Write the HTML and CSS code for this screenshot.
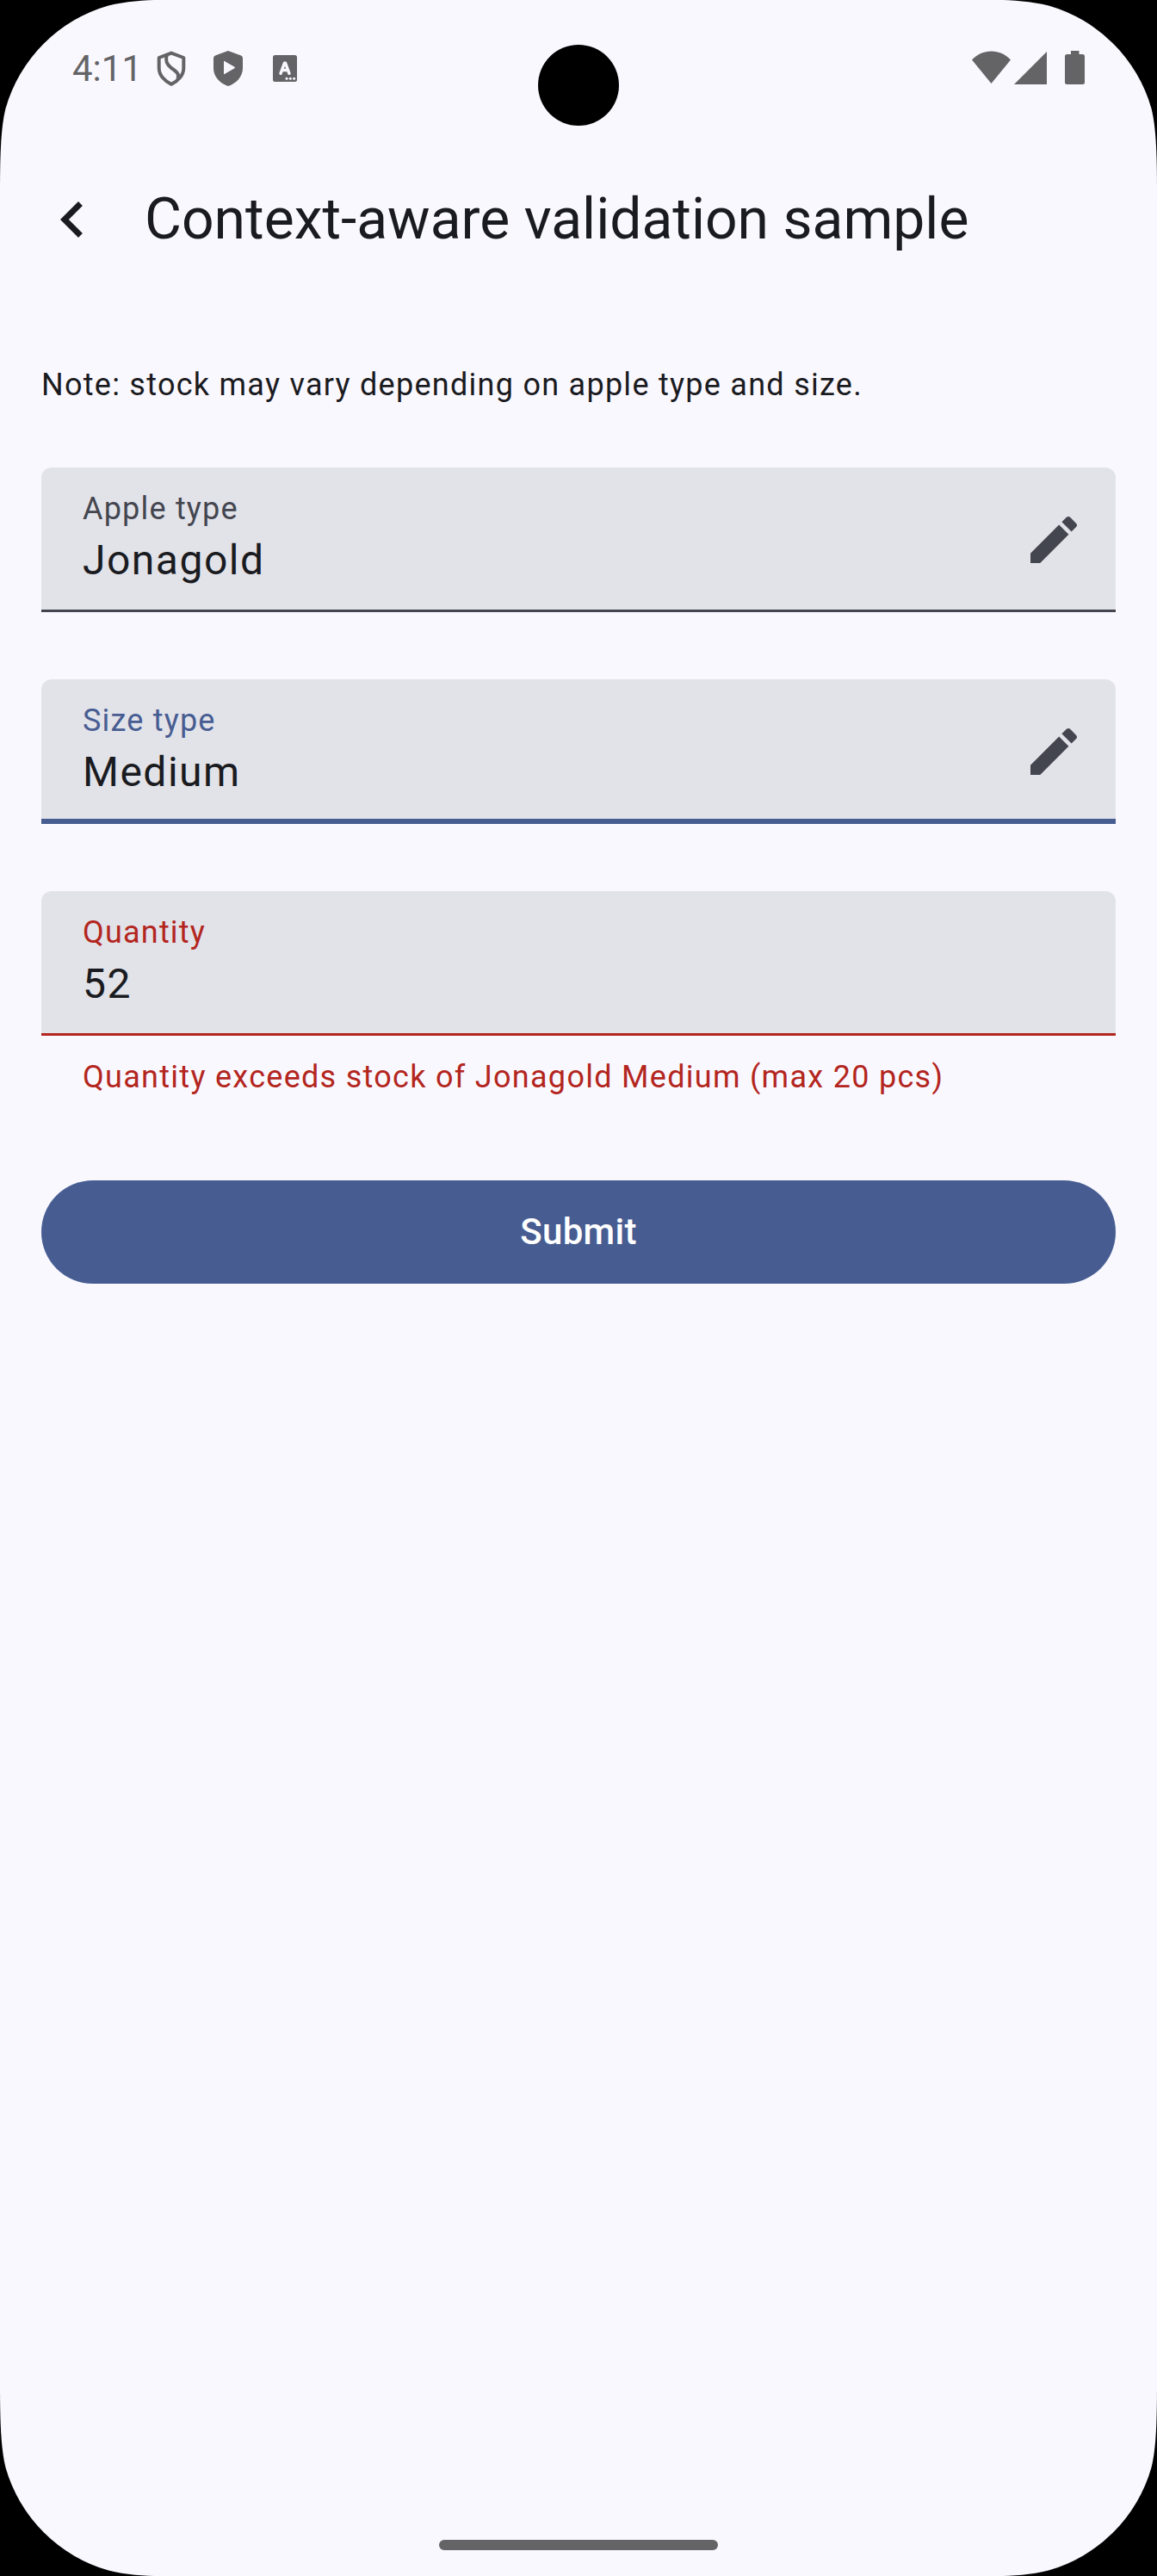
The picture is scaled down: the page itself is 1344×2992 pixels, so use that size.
FILE: index.html
```html
<!DOCTYPE html>
<html lang="en">
<head>
<meta charset="utf-8">
<title>Context-aware validation sample</title>
<link rel="stylesheet" href="styles.css">
</head>
<body>
<div class="screen">
  <header class="status-bar">
    <span class="clock">4:11</span>
    <svg class="status-icon shield" viewBox="0 0 34 42"><path d="M17 2.6L31.3 8V20C31.3 28.5 24.500 35.500 17 38.800C9.500 35.500 2.700 28.500 2.700 20V8Z"/><path d="M11.800 5C9.500 12 12 16 17 20C23 24 27 27.500 24.500 33"/></svg>
    <svg class="status-icon play" viewBox="0 0 34 42"><path fill-rule="evenodd" d="M17 0L32 5.400Q34 6.200 34 8.500V20C34 30 26.500 38 17 41C7.500 38 0 30 0 20V8.500Q0 6.200 2 5.400ZM12 12.300V26.700Q12 27.500 12.800 27.100L24.500 20.300Q25.300 19.500 24.500 18.700L12.800 11.900Q12 11.500 12 12.300Z"/></svg>
    <svg class="status-icon caption" viewBox="0 0 28 31"><rect width="28" height="31" rx="2.500"/><path d="M9 21.300L13.400 9.300H14.600L19 21.300M10.800 17.500H17.200"/><circle cx="16" cy="27.200" r="1.500"/><circle cx="20.300" cy="27.200" r="1.500"/><circle cx="24.600" cy="27.200" r="1.500"/></svg>
    <span class="spacer"></span>
    <svg class="status-icon wifi" viewBox="0 0 45 38"><path d="M0 10.500C6 4 14 .5 22.500 .5S39 4 45 10.500L22.500 38Z"/></svg>
    <svg class="status-icon signal" viewBox="0 0 38 38"><path d="M38 0V38H0Z"/></svg>
    <svg class="status-icon battery" viewBox="0 0 23 39"><path d="M7 0H16.500V4H20.500Q23 4 23 6.500V36.500Q23 39 20.500 39H2.500Q0 39 0 36.500V6.500Q0 4 2.500 4H7Z"/></svg>
  </header>
  <div class="camera"></div>

  <div class="app-bar">
    <svg class="back" viewBox="0 0 24 24"><path d="M15.410 7.410L14 6l-6 6 6 6 1.410-1.410L10.830 12z"/></svg>
    <h1 class="title">Context-aware validation sample</h1>
  </div>

  <main class="form">
    <p class="note">Note: stock may vary depending on apple type and size.</p>
    <div class="field">
      <div class="field-text">
        <span class="label">Apple type</span>
        <span class="value">Jonagold</span>
      </div>
      <svg class="edit" viewBox="0 0 24 24"><path d="M3 17.250V21h3.750L17.810 9.940l-3.750-3.750L3 17.250zM20.710 7.040c.39-.39.39-1.020 0-1.410l-2.340-2.340c-.39-.39-1.020-.39-1.410 0l-1.830 1.830 3.750 3.750 1.830-1.830z"/></svg>
    </div>
    <div class="field focused">
      <div class="field-text">
        <span class="label">Size type</span>
        <span class="value">Medium</span>
      </div>
      <svg class="edit" viewBox="0 0 24 24"><path d="M3 17.250V21h3.750L17.810 9.940l-3.750-3.750L3 17.250zM20.710 7.040c.39-.39.39-1.020 0-1.410l-2.340-2.340c-.39-.39-1.020-.39-1.410 0l-1.830 1.830 3.750 3.750 1.830-1.830z"/></svg>
    </div>
    <div class="field invalid">
      <div class="field-text">
        <span class="label">Quantity</span>
        <span class="value">52</span>
      </div>
    </div>
    <p class="error">Quantity exceeds stock of Jonagold Medium (max 20 pcs)</p>
    <button class="submit" type="button">Submit</button>
  </main>
  <div class="home-bar"></div>
</div>
</body>
</html>
```

FILE: styles.css
```css
* { box-sizing: border-box; }
html { background: #000; }
body { margin: 0; font-family: Roboto, sans-serif; color: #1a1b20; }
.screen {
  position: relative;
  display: flex;
  flex-direction: column;
  width: 1344px;
  height: 2992px;
  background: #faf8ff;
  /* display outline: round corners that ease into the straight edges */
  clip-path: path("M0 228C0 185 .5 150 6.500 126A174 174 0 0 1 126 6.500C146 1.500 168 0 186 0H1158C1176 0 1198 1.500 1218 6.500A174 174 0 0 1 1337.500 126C1343.500 150 1344 185 1344 228V2764C1344 2807 1343.500 2842 1337.500 2866A174 174 0 0 1 1218 2985.500C1198 2990.500 1176 2992 1158 2992H186C168 2992 146 2990.500 126 2985.500A174 174 0 0 1 6.500 2866C.5 2842 0 2807 0 2764Z");
}
.status-bar {
  display: flex;
  align-items: flex-start;
  height: 156px;
  padding: 59px 84px 0;
  color: #646466;
}
.clock { width: 98px; font-size: 42px; line-height: 42px; }
.status-icon { display: block; flex: none; fill: currentColor; }
.shield { width: 34px; height: 42px; }
.shield path { fill: none; stroke: currentColor; stroke-width: 4; stroke-linejoin: round; }
.play { width: 34px; height: 42px; margin-left: 32px; }
.caption { width: 28px; height: 31px; margin: 5px 0 0 35px; }
.caption path { fill: none; stroke: #faf8ff; stroke-width: 3.400; stroke-linecap: round; stroke-linejoin: round; }
.caption circle { fill: #faf8ff; }
.spacer { flex: 1; }
.wifi { width: 45px; height: 38px; }
.signal { width: 38px; height: 38px; margin: 1px 0 0 4px; }
.battery { width: 23px; height: 39px; margin: 0 0 0 21px; }
.camera {
  position: absolute;
  top: 52px;
  left: 625px;
  width: 94px;
  height: 94px;
  border-radius: 50%;
  background: #000;
}
.app-bar { display: flex; align-items: center; height: 192px; padding: 6px 42px 0; }
.back { width: 84px; height: 84px; fill: currentColor; }
.title { margin: 0 0 0 42px; font-size: 66px; line-height: 84px; font-weight: 400; }
.form { display: flex; flex-direction: column; padding: 0 48px; }
.note { margin: 75px 0 72px; font-size: 36px; line-height: 48px; letter-spacing: 1.270px; }
.field {
  display: flex;
  align-items: center;
  justify-content: space-between;
  height: 168px;
  margin-bottom: 78px;
  padding: 0 36px 0 48px;
  background: #e2e2e9;
  border-radius: 12px 12px 0 0;
  box-shadow: inset 0 -3px #44464f;
}
.field-text { display: flex; flex-direction: column; }
.label { font-size: 36px; line-height: 48px; letter-spacing: 1.200px; color: #44464f; }
.value { font-size: 48px; line-height: 72px; letter-spacing: 1.500px; }
.edit { width: 72px; height: 72px; fill: #44464f; }
.focused { box-shadow: inset 0 -6px #475d92; }
.focused .label { color: #475d92; }
.invalid { margin-bottom: 0; box-shadow: inset 0 -3px #b3261e; }
.invalid .label, .error { color: #b3261e; }
.error { margin: 24px 48px 96px; font-size: 36px; line-height: 48px; letter-spacing: 1.290px; }
.submit {
  height: 120px;
  border: 0;
  border-radius: 60px;
  background: #475d92;
  color: #fff;
  font: 500 42px/60px Roboto, sans-serif;
  letter-spacing: .3px;
}
.home-bar { width: 324px; height: 12px; margin: auto auto 30px; border-radius: 6px; background: #646466; }
```
